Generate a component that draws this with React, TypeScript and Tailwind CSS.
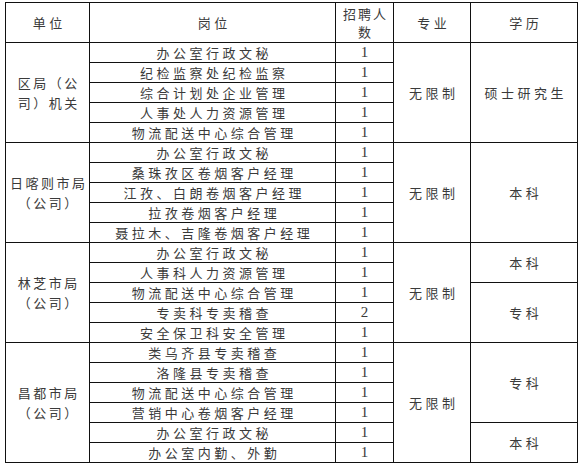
import React from "react";

type Row = { post: string; count: string };
type Group = {
    unit: string[];
    rows: Row[];
    edu: { label: string; span: number }[];
};

const groups: Group[] = [
    {
        unit: ["区局（公", "司）机关"],
        rows: [
            { post: "办公室行政文秘", count: "1" },
            { post: "纪检监察处纪检监察", count: "1" },
            { post: "综合计划处企业管理", count: "1" },
            { post: "人事处人力资源管理", count: "1" },
            { post: "物流配送中心综合管理", count: "1" },
        ],
        edu: [{ label: "硕士研究生", span: 5 }],
    },
    {
        unit: ["日喀则市局", "（公司）"],
        rows: [
            { post: "办公室行政文秘", count: "1" },
            { post: "桑珠孜区卷烟客户经理", count: "1" },
            { post: "江孜、白朗卷烟客户经理", count: "1" },
            { post: "拉孜卷烟客户经理", count: "1" },
            { post: "聂拉木、吉隆卷烟客户经理", count: "1" },
        ],
        edu: [{ label: "本科", span: 5 }],
    },
    {
        unit: ["林芝市局", "（公司）"],
        rows: [
            { post: "办公室行政文秘", count: "1" },
            { post: "人事科人力资源管理", count: "1" },
            { post: "物流配送中心综合管理", count: "1" },
            { post: "专卖科专卖稽查", count: "2" },
            { post: "安全保卫科安全管理", count: "1" },
        ],
        edu: [
            { label: "本科", span: 2 },
            { label: "专科", span: 3 },
        ],
    },
    {
        unit: ["昌都市局", "（公司）"],
        rows: [
            { post: "类乌齐县专卖稽查", count: "1" },
            { post: "洛隆县专卖稽查", count: "1" },
            { post: "物流配送中心综合管理", count: "1" },
            { post: "营销中心卷烟客户经理", count: "1" },
            { post: "办公室行政文秘", count: "1" },
            { post: "办公室内勤、外勤", count: "1" },
        ],
        edu: [
            { label: "专科", span: 4 },
            { label: "本科", span: 2 },
        ],
    },
];

const cell = "border border-[#111] text-center align-middle p-0";
const cjk = "tracking-[3.5px] pl-[3.5px]";

const App: React.FC = () => {
    return (
        <div
            className="w-[580px] h-[465px] bg-white text-[#3a3a3a] text-[13px] pt-[2px] pl-[5px]"
            style={{ fontFamily: '"Noto Sans CJK SC", sans-serif' }}
        >
            <table className="table-fixed border-collapse w-[572px]">
                <colgroup>
                    <col className="w-[84px]" />
                    <col className="w-[246px]" />
                    <col className="w-[58px]" />
                    <col className="w-[77px]" />
                    <col className="w-[107px]" />
                </colgroup>
                <thead>
                    <tr className="h-[40px]">
                        <th className={`${cell} ${cjk} font-normal`}>单位</th>
                        <th className={`${cell} ${cjk} font-normal`}>岗位</th>
                        <th className={`${cell} font-normal leading-[18px] tracking-[2px] pl-[2px]`}>
                            <div>招聘人</div>
                            <div>数</div>
                        </th>
                        <th className={`${cell} ${cjk} font-normal`}>专业</th>
                        <th className={`${cell} ${cjk} font-normal`}>学历</th>
                    </tr>
                </thead>
                <tbody>
                    {groups.map((g) => {
                        // which row starts each 学历 block
                        const eduStarts: Record<number, { label: string; span: number }> = {};
                        let at = 0;
                        g.edu.forEach((e) => {
                            eduStarts[at] = e;
                            at += e.span;
                        });
                        return g.rows.map((r, i) => (
                            <tr key={g.unit[0] + i} className="h-[20px]">
                                {i === 0 && (
                                    <td
                                        rowSpan={g.rows.length}
                                        className={`${cell} tracking-[2.5px] pl-[2.5px] leading-[20px] whitespace-nowrap`}
                                    >
                                        <div>{g.unit[0]}</div>
                                        <div>{g.unit[1]}</div>
                                    </td>
                                )}
                                <td className={`${cell} ${cjk} leading-[19px] whitespace-nowrap`}>{r.post}</td>
                                <td
                                    className={`${cell} text-[15px] leading-[19px]`}
                                    style={{ fontFamily: '"Liberation Serif", serif' }}
                                >
                                    {r.count}
                                </td>
                                {i === 0 && (
                                    <td rowSpan={g.rows.length} className={`${cell} ${cjk}`}>
                                        无限制
                                    </td>
                                )}
                                {eduStarts[i] && (
                                    <td rowSpan={eduStarts[i].span} className={`${cell} ${cjk}`}>
                                        {eduStarts[i].label}
                                    </td>
                                )}
                            </tr>
                        ));
                    })}
                </tbody>
            </table>
        </div>
    );
};

export default App;
